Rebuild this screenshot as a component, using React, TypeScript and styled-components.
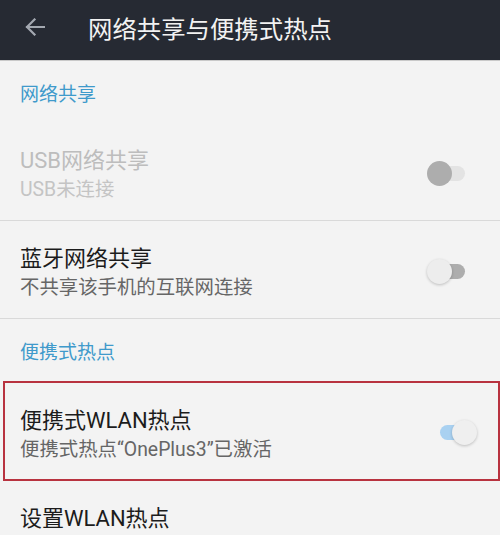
import React from 'react';
import styled, { createGlobalStyle } from 'styled-components';

const GlobalStyle = createGlobalStyle`
  html, body {
    margin: 0;
    padding: 0;
    background: #f3f3f3;
  }
  body {
    font-family: Roboto, "Noto Sans CJK SC", sans-serif;
  }
`;

const Page = styled.div`
  width: 500px;
  height: 535px;
  overflow: hidden;
  background: #f3f3f3;
`;

const TopBar = styled.header`
  display: flex;
  align-items: center;
  height: 60px;
  background: #262a33;
  border-bottom: 1px solid #c9c9c9;
`;

const BackButton = styled.div`
  display: flex;
  align-items: center;
  justify-content: center;
  width: 44px;
  height: 60px;
  margin: -6px 31px 0 13px;
`;

const Title = styled.h1`
  margin: 0 0 6px;
  font-size: 24.4px;
  font-weight: 400;
  color: #f2f2f2;
`;

const SectionHeader = styled.div`
  box-sizing: border-box;
  height: 62px;
  padding: 22px 20px 0;
  font-size: 19px;
  line-height: 24px;
  color: #3f9acb;
`;

const Row = styled.div<{ $highlighted?: boolean; $divider?: boolean }>`
  display: flex;
  align-items: center;
  justify-content: space-between;
  box-sizing: border-box;
  height: ${({ $highlighted }) => ($highlighted ? '100px' : '98px')};
  padding: ${({ $highlighted }) => ($highlighted ? '0 21px 0 15px' : '0 34px 0 20px')};
  border-bottom: ${({ $divider }) => ($divider ? '1px solid #d9d9d9' : 'none')};
  ${({ $highlighted }) =>
    $highlighted &&
    `
    margin-left: 3px;
    width: 497px;
    border: 2px solid #b8323f;
  `}
`;

const TextBlock = styled.div`
  display: flex;
  flex-direction: column;
  align-self: flex-start;
  margin-top: 24px;
`;

const RowTitle = styled.div<{ $disabled?: boolean }>`
  font-size: 22px;
  line-height: 28px;
  color: ${({ $disabled }) => ($disabled ? '#bdbdbd' : '#1c1c1c')};
`;

const RowSubtitle = styled.div<{ $disabled?: boolean }>`
  font-size: 19.4px;
  line-height: 29px;
  color: ${({ $disabled }) => ($disabled ? '#c4c4c4' : '#666666')};
`;

const SwitchBox = styled.div`
  position: relative;
  width: 39px;
  height: 25px;
  margin-top: 3px;
  flex-shrink: 0;
`;

const Track = styled.div<{ $color: string }>`
  position: absolute;
  left: 2px;
  top: 5px;
  width: 36px;
  height: 15px;
  border-radius: 8px;
  background: ${({ $color }) => $color};
`;

const Thumb = styled.div<{ $on: boolean; $color: string; $shadow: boolean }>`
  position: absolute;
  top: 0;
  ${({ $on }) => ($on ? 'right: 0;' : 'left: 0;')}
  width: 25px;
  height: 25px;
  border-radius: 50%;
  background: ${({ $color }) => $color};
  box-shadow: ${({ $shadow }) => ($shadow ? '0 1px 3px rgba(0,0,0,0.22)' : 'none')};
`;

type SwitchState = 'disabled' | 'off' | 'on';

const switchColors: Record<SwitchState, { track: string; thumb: string }> = {
  disabled: { track: '#e3e3e3', thumb: '#adadad' },
  off: { track: '#adadad', thumb: '#ededed' },
  on: { track: '#a9d1f1', thumb: '#efefef' },
};

const Switch: React.FC<{ state: SwitchState }> = ({ state }) => (
  <SwitchBox>
    <Track $color={switchColors[state].track} />
    <Thumb
      $on={state === 'on'}
      $color={switchColors[state].thumb}
      $shadow={state !== 'disabled'}
    />
  </SwitchBox>
);

const BackArrow = () => (
  <svg width="20" height="18" viewBox="0 0 20 18" fill="none">
    <path
      d="M19 9H2M9.5 1.5L2 9l7.5 7.5"
      stroke="#a3a8b0"
      strokeWidth="2.2"
      strokeLinecap="square"
    />
  </svg>
);

interface Item {
  title: string;
  subtitle?: string;
  switchState?: SwitchState;
  disabled?: boolean;
  highlighted?: boolean;
  divider?: boolean;
}

const SettingRow: React.FC<{ item: Item }> = ({ item }) => (
  <Row $highlighted={item.highlighted} $divider={item.divider}>
    <TextBlock>
      <RowTitle $disabled={item.disabled}>{item.title}</RowTitle>
      {item.subtitle && (
        <RowSubtitle $disabled={item.disabled}>{item.subtitle}</RowSubtitle>
      )}
    </TextBlock>
    {item.switchState && <Switch state={item.switchState} />}
  </Row>
);

const tetheringItems: Item[] = [
  {
    title: 'USB网络共享',
    subtitle: 'USB未连接',
    switchState: 'disabled',
    disabled: true,
    divider: true,
  },
  {
    title: '蓝牙网络共享',
    subtitle: '不共享该手机的互联网连接',
    switchState: 'off',
    divider: true,
  },
];

const hotspotItems: Item[] = [
  {
    title: '便携式WLAN热点',
    subtitle: '便携式热点“OnePlus3”已激活',
    switchState: 'on',
    highlighted: true,
  },
  { title: '设置WLAN热点' },
];

const App: React.FC = () => (
  <Page>
    <GlobalStyle />
    <TopBar>
      <BackButton>
        <BackArrow />
      </BackButton>
      <Title>网络共享与便携式热点</Title>
    </TopBar>
    <SectionHeader>网络共享</SectionHeader>
    {tetheringItems.map((item) => (
      <SettingRow key={item.title} item={item} />
    ))}
    <SectionHeader>便携式热点</SectionHeader>
    {hotspotItems.map((item) => (
      <SettingRow key={item.title} item={item} />
    ))}
  </Page>
);

export default App;
